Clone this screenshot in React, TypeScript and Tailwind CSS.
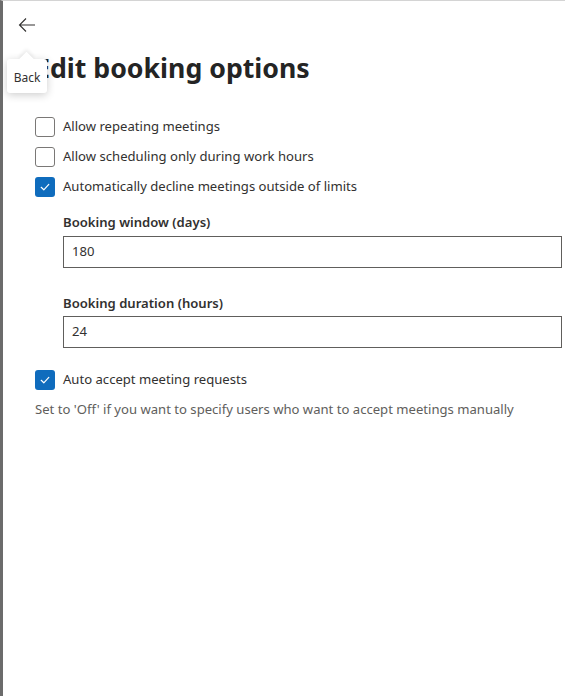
import React from "react";

function Check() {
  return (
    <svg width="12" height="12" viewBox="0 0 12 12" fill="none">
      <path d="M2.2 6.3 L4.8 8.8 L9.8 3.4" stroke="white" strokeWidth="1.2" strokeLinecap="round" strokeLinejoin="round" />
    </svg>
  );
}

function Box({ checked, label }: { checked: boolean; label: string }) {
  return (
    <div className="flex h-[30px] items-center">
      <div
        className={
          checked
            ? "flex h-[20px] w-[20px] items-center justify-center rounded-[3px] bg-[#0f6cbd]"
            : "h-[20px] w-[20px] rounded-[3px] border border-[#7a7876] bg-white"
        }
      >
        {checked ? <Check /> : null}
      </div>
      <span className="ml-[8px] text-[13.1px] text-[#323130]">{label}</span>
    </div>
  );
}

export default function App() {
  return (
    <div
      className="relative h-[696px] w-[565px] overflow-hidden border-l-[3px] border-t border-l-[#6b6b6b] border-t-[#d4d4d4] bg-white"
      style={{ fontFamily: '"Noto Sans", "Open Sans", sans-serif' }}
    >
      <div className="pl-[15px] pt-[16px]">
        <svg width="18" height="16" viewBox="0 0 18 16" fill="none">
          <path d="M8 1.5 L1.5 8 L8 14.5 M1.5 8 H17" stroke="#323130" strokeWidth="1.1" />
        </svg>
      </div>
      <h1 className="ml-[32px] mt-[18px] text-[26.7px] font-bold leading-[34px] text-[#242424]">Edit booking options</h1>
      <div className="ml-[32px] mr-[3px] mt-[27px] flex flex-col">
        <Box checked={false} label="Allow repeating meetings" />
        <Box checked={false} label="Allow scheduling only during work hours" />
        <Box checked={true} label="Automatically decline meetings outside of limits" />
        <div className="ml-[28px] mt-[10px] flex flex-col">
          <label className="text-[13.1px] font-semibold leading-[20px] text-[#323130]">Booking window (days)</label>
          <div className="mt-[4px] flex h-[32px] items-center border border-[#605e5c] px-[8px] text-[13.1px] text-[#323130]">180</div>
          <label className="mt-[25px] text-[13.1px] font-semibold leading-[20px] text-[#323130]">Booking duration (hours)</label>
          <div className="mt-[3px] flex h-[32px] items-center border border-[#605e5c] px-[8px] text-[13.1px] text-[#323130]">24</div>
        </div>
        <div className="mt-[17px]">
          <Box checked={true} label="Auto accept meeting requests" />
        </div>
        <p className="mt-[4px] text-[13.1px] leading-[20px] text-[#605e5c]">
          Set to 'Off' if you want to specify users who want to accept meetings manually
        </p>
      </div>
      <div className="absolute left-[4px] top-[58px] flex h-[34px] w-[40px] items-center justify-center rounded-[3px] bg-white pt-[4px] text-[12px] text-[#323130] shadow-[0_2px_8px_rgba(0,0,0,0.2)]">
        <div className="absolute left-[14px] top-[-5px] h-[11px] w-[11px] rotate-45 bg-white shadow-[-2px_-2px_4px_rgba(0,0,0,0.08)]" />
        <div className="absolute left-[8px] top-0 h-[7px] w-[24px] bg-white" />
        <span className="relative">Back</span>
      </div>
    </div>
  );
}
